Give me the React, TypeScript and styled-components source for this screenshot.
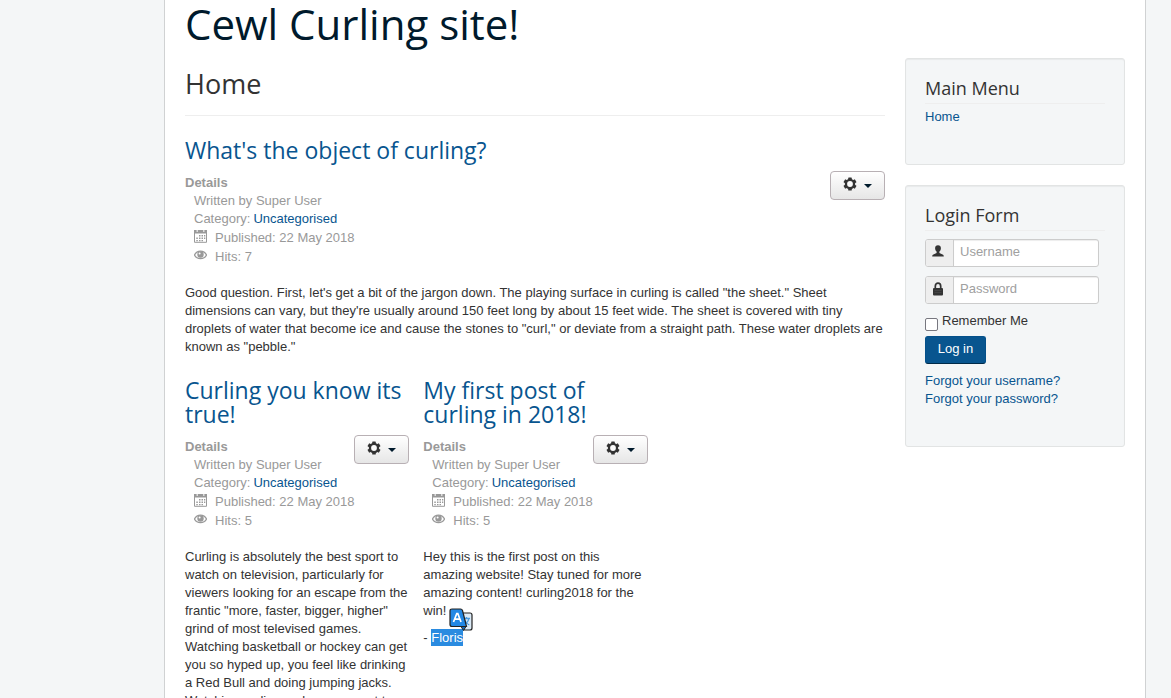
import React from "react";
import styled, { createGlobalStyle } from "styled-components";

const Global = createGlobalStyle`
  *, *::before, *::after { box-sizing: border-box; }
  body {
    margin: 0;
    background: #f4f6f7;
    color: #333;
    font: 13px/18px "Liberation Sans", Helvetica, Arial, sans-serif;
  }
  button, input { font: inherit; }
`;

const Page = styled.div`
  height: 100vh;
  padding: 0 25px 0 165px;
  overflow: hidden;
`;

const Container = styled.div`
  min-height: 100%;
  padding: 0 20px 20px;
  background: #fff;
  border-right: 1px solid #d0d2d3;
  box-shadow: -1px 0 #d0d2d3;
`;

const SiteTitle = styled.div`
  padding-bottom: 10px;
  color: #001a2c;
  font: 42px/48px "Open Sans", sans-serif;
`;

const Columns = styled.div`
  display: grid;
  grid-template-columns: minmax(0, 1fr) 220px;
  gap: 20px;
`;

const PageHeader = styled.header`
  padding: 8px 0 13px;
  margin-bottom: 20px;
  border-bottom: 1px solid #eee;
`;

const PageTitle = styled.h1`
  margin: 0;
  font: 27px/36px "Open Sans", sans-serif;
`;

const Link = styled.a`
  color: #08558f;
  text-decoration: none;
`;

const PostTitle = styled.h2`
  margin: 0 0 11px;
  font: 23px/24px "Open Sans", sans-serif;
  padding-top: 2px;
`;

const MetaRow = styled.div`
  display: flex;
  justify-content: space-between;
  align-items: flex-start;
  margin-bottom: 18px;
`;

const Meta = styled.dl`
  margin: 0;
  padding-top: 1px;
  color: #999;
`;

const MetaTerm = styled.dt`
  font-weight: bold;
`;

const MetaItem = styled.dd<{ $icon?: boolean }>`
  display: flex;
  align-items: center;
  gap: ${(p) => (p.$icon ? "8px" : "3px")};
  height: ${(p) => (p.$icon ? "19px" : "18px")};
  margin: 0 0 0 9px;
  white-space: nowrap;
  svg { margin-bottom: 3px; }
`;

const GearButton = styled.button`
  display: flex;
  align-items: center;
  gap: 7px;
  width: 55px;
  height: 29px;
  margin-top: -2px;
  padding: 0 12px 4px;
  border: 1px solid #b8b0b4;
  border-radius: 4px;
  background: linear-gradient(#fff, #e6e6e6);
  color: #333;
`;

const Caret = styled.span`
  margin-top: 4px;
  border: 4px solid transparent;
  border-top-color: #001a2c;
  border-bottom: 0;
`;

const Text = styled.p`
  margin: 0 0 9px;
`;

const PostRow = styled.div`
  display: grid;
  grid-template-columns: repeat(3, minmax(0, 1fr));
  gap: 15px;
  margin-top: 20px;
`;

const Selected = styled.span`
  display: inline-block;
  height: 17px;
  background: #2a8be0;
  color: #fff;
`;

const SignOff = styled.p`
  position: relative;
  margin: 0;
`;

const TranslateBadge = styled.button`
  position: absolute;
  left: 26px;
  top: -21px;
  width: 24px;
  height: 24px;
  padding: 0;
  border: 0;
  background: none;
`;

const Side = styled.aside`
  display: flex;
  flex-direction: column;
  gap: 20px;
`;

const Well = styled.section`
  padding: 19px 19px 38px;
  border: 1px solid #e2e4e4;
  border-radius: 3px;
  background: #f4f6f7;
  box-shadow: inset 0 1px 1px rgba(0, 0, 0, 0.05);
`;

const WellTitle = styled.h3`
  margin: 0 0 4px;
  padding-bottom: 5px;
  border-bottom: 1px solid #eee;
  font: 18px/20px "Open Sans", sans-serif;
`;

const Form = styled.form`
  padding-top: 4px;
`;

const Field = styled.div`
  display: flex;
  width: 174px;
  height: 28px;
  margin-bottom: 9px;
  border: 1px solid #ccc;
  border-radius: 3px;
  background: #fff;
  overflow: hidden;
`;

const AddOn = styled.label`
  display: flex;
  justify-content: center;
  width: 28px;
  padding: 5px 3px 0 0;
  border-right: 1px solid #ccc;
  background: #eee;
`;

const Input = styled.input`
  flex: 1;
  min-width: 0;
  padding: 0 6px 3px;
  border: 0;
  background: none;
  box-shadow: inset 0 1px 1px rgba(0, 0, 0, 0.075);
  color: #555;
  &::placeholder { color: #a0a0a0; opacity: 1; }
`;

const Remember = styled.div`
  display: flex;
  gap: 4px;
  height: 23px;
  label { margin-top: -1px; }
`;

const Check = styled.input`
  appearance: none;
  width: 13px;
  height: 13px;
  margin: 5px 0 0;
  border: 1px solid #77777f;
  border-radius: 2px;
  background: #fff;
`;

const LoginButton = styled.button`
  display: block;
  width: 61px;
  height: 28px;
  margin-bottom: 8px;
  padding: 0 0 2px;
  border: 1px solid #04508a;
  border-bottom-color: #002a48;
  border-radius: 3px;
  background: #08558f;
  color: #fff;
`;

const LinkList = styled.ul`
  margin: 0;
  padding: 0;
  list-style: none;
`;

const GearIcon = () => (
  <svg width="14" height="14" viewBox="0 0 14 14" aria-hidden="true">
    <g fill="#333">
      {[0, 60, 120].map((a) => (
        <rect key={a} x="5.2" y="0.4" width="3.6" height="13.2" rx="0.6" transform={`rotate(${a} 7 7)`} />
      ))}
      <circle cx="7" cy="7" r="5.2" />
    </g>
    <circle cx="7" cy="7" r="2.9" fill="#fafafa" />
  </svg>
);

const CalendarIcon = () => (
  <svg width="13" height="14" viewBox="0 0 13 14" aria-hidden="true">
    <path d="M.5 1.500h12v11.800H.5z" fill="none" stroke="#999" />
    <path d="M0 1h13v3.500H0z" fill="#999" />
    <path d="M2.500 1h1.500v2H2.500zM9 1h1.500v2H9z" fill="#ddd" />
    <path d="M5 6h1.500v1.500H5zM7.500 6H9v1.500H7.500zM10 6h1.300v1.500H10zM2.300 8.500h1.500V10H2.300zM5 8.500h1.500V10H5zM7.500 8.500H9V10H7.500zM10 8.500h1.300V10H10zM2.300 11h1.500v1.200H2.300zM5 11h1.500v1.200H5zM7.500 11H9v1.200H7.500z" fill="#999" />
  </svg>
);

const EyeIcon = () => (
  <svg width="13" height="10" viewBox="0 0 13 10" aria-hidden="true">
    <path d="M.5 5C3-.2 10-.2 12.500 5 10 9.700 3 9.700.5 5z" fill="none" stroke="#999" strokeWidth="1.300" />
    <circle cx="6.500" cy="4.500" r="3.200" fill="#999" />
    <circle cx="5.600" cy="3.400" r="1" fill="#fff" />
  </svg>
);

const UserIcon = () => (
  <svg width="12" height="12" viewBox="0 0 12 12" aria-hidden="true">
    <path d="M6 .3c1.900 0 2.900 1.200 2.900 2.900C8.900 4.700 8.200 6 7.400 6.600v1.500l3.200 1.300c.8.300 1.200.9 1.200 2H.2c0-1.100.4-1.700 1.200-2l3.200-1.300V6.600C3.800 6 3.100 4.700 3.100 3.200 3.100 1.500 4.100.3 6 .3z" fill="#333" />
  </svg>
);

const LockIcon = () => (
  <svg width="10" height="14" viewBox="0 0 10 14" aria-hidden="true">
    <path d="M2.300 7V4.200C2.300.2 7.700.2 7.700 4.200V7" fill="none" stroke="#333" strokeWidth="1.700" />
    <rect y="6" width="10" height="7.500" rx="1" fill="#333" />
    <path d="M1.500 8.500h7M1.500 10.500h7" stroke="#555" strokeWidth=".5" />
  </svg>
);

const TranslateIcon = () => (
  <svg width="24" height="24" viewBox="0 0 24 24" aria-hidden="true">
    <path d="M10 5h11q2 0 2 2v13q0 2-2 2h-6z" fill="#dcebf7" stroke="#222" strokeWidth="1.200" />
    <path d="M14 10.500h7M17.500 9v1.500M19.800 10.500c-.5 3-2.500 5-4.500 6M15.500 12c1 2.200 2.700 4 4.800 5" fill="none" stroke="#4a9be0" strokeWidth="1.300" />
    <path d="M12 18.500h5l-2.500 4z" fill="#1769b5" stroke="#222" />
    <path d="M3 1h8.500q1.500 0 2 1.500l4 16H3q-2 0-2-2V3q0-2 2-2z" fill="#2288e5" stroke="#222" strokeWidth="1.200" />
    <path d="M4.500 14 7.800 5.500h1L12 14M5.800 11.200h5" fill="none" stroke="#fff" strokeWidth="1.700" />
  </svg>
);

const Post = ({ title, hits, children }: { title: string; hits: number; children: React.ReactNode }) => (
  <article>
    <PostTitle><Link href="#">{title}</Link></PostTitle>
    <MetaRow>
      <Meta>
        <MetaTerm>Details</MetaTerm>
        <MetaItem>Written by Super User</MetaItem>
        <MetaItem>Category: <Link href="#">Uncategorised</Link></MetaItem>
        <MetaItem $icon><CalendarIcon />Published: 22 May 2018</MetaItem>
        <MetaItem $icon><EyeIcon />Hits: {hits}</MetaItem>
      </Meta>
      <GearButton type="button" aria-label="Post options"><GearIcon /><Caret /></GearButton>
    </MetaRow>
    {children}
  </article>
);

export default function App() {
  return (
    <Page>
      <Global />
      <Container>
        <SiteTitle>Cewl Curling site!</SiteTitle>
        <Columns>
          <main>
            <PageHeader><PageTitle>Home</PageTitle></PageHeader>
            <Post title="What's the object of curling?" hits={7}>
              <Text>
                Good question. First, let's get a bit of the jargon down. The playing surface in curling is called "the sheet." Sheet
                dimensions can vary, but they're usually around 150 feet long by about 15 feet wide. The sheet is covered with tiny
                droplets of water that become ice and cause the stones to "curl," or deviate from a straight path. These water droplets are
                known as "pebble."
              </Text>
            </Post>
            <PostRow>
              <Post title="Curling you know its true!" hits={5}>
                <Text>
                  Curling is absolutely the best sport to watch on television, particularly for viewers looking for an escape from the
                  frantic "more, faster, bigger, higher" grind of most televised games. Watching basketball or hockey can get you so
                  hyped up, you feel like drinking a Red Bull and doing jumping jacks. Watching curling makes you want to
                </Text>
              </Post>
              <Post title="My first post of curling in 2018!" hits={5}>
                <Text>
                  Hey this is the first post on this amazing website! Stay tuned for more amazing content! curling2018 for the win!
                </Text>
                <SignOff>
                  - <Selected>Floris</Selected>
                  <TranslateBadge type="button" aria-label="Translate selection"><TranslateIcon /></TranslateBadge>
                </SignOff>
              </Post>
            </PostRow>
          </main>
          <Side>
            <Well>
              <WellTitle>Main Menu</WellTitle>
              <LinkList><li><Link href="#">Home</Link></li></LinkList>
            </Well>
            <Well>
              <WellTitle>Login Form</WellTitle>
              <Form>
                <Field>
                  <AddOn htmlFor="username" aria-label="Username"><UserIcon /></AddOn>
                  <Input id="username" type="text" placeholder="Username" />
                </Field>
                <Field>
                  <AddOn htmlFor="password" aria-label="Password"><LockIcon /></AddOn>
                  <Input id="password" type="password" placeholder="Password" />
                </Field>
                <Remember>
                  <Check id="remember" type="checkbox" />
                  <label htmlFor="remember">Remember Me</label>
                </Remember>
                <LoginButton type="button">Log in</LoginButton>
                <LinkList>
                  <li><Link href="#">Forgot your username?</Link></li>
                  <li><Link href="#">Forgot your password?</Link></li>
                </LinkList>
              </Form>
            </Well>
          </Side>
        </Columns>
      </Container>
    </Page>
  );
}
